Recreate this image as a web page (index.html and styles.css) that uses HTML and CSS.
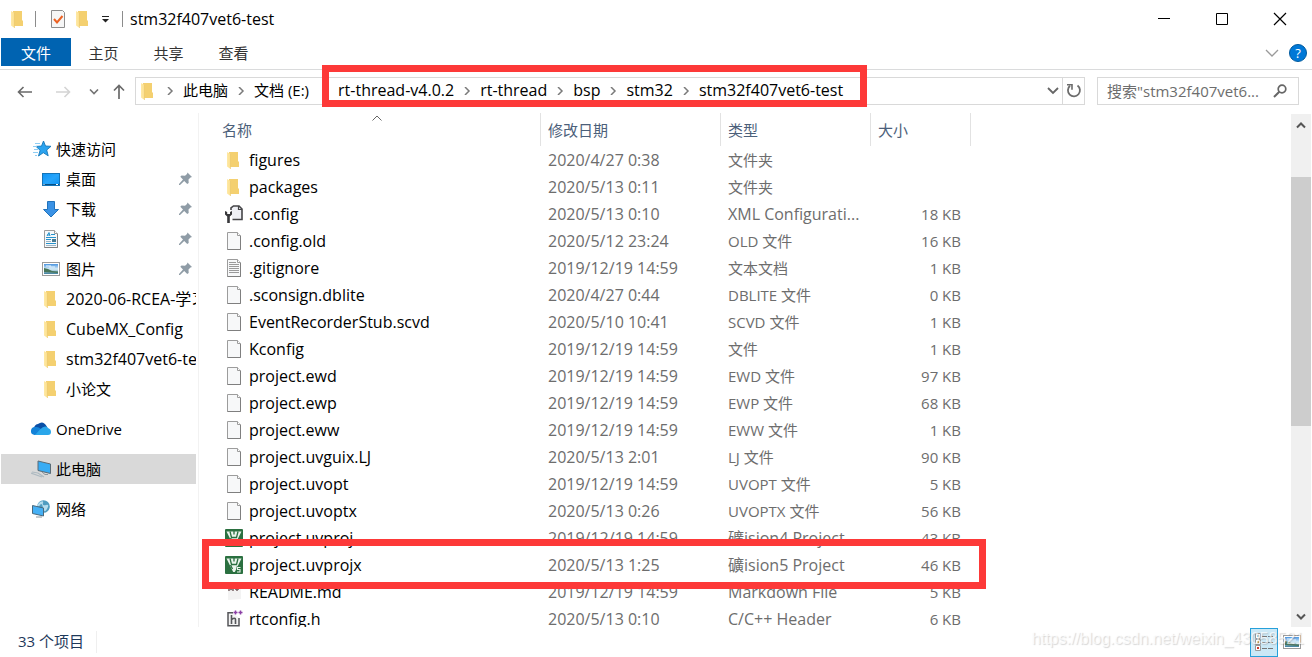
FILE: index.html
```html
<!DOCTYPE html>
<html lang="zh-CN">
<head>
<meta charset="utf-8">
<meta name="viewport" content="width=device-width, initial-scale=1">
<title>stm32f407vet6-test</title>
<link rel="stylesheet" href="styles.css">
</head>
<body>
<svg class="defs" aria-hidden="true">
  <defs>
    <linearGradient id="gFold" x1="0" x2="1"><stop offset="0" stop-color="#ffe9a6"/><stop offset="1" stop-color="#fbdf8d"/></linearGradient>
    <linearGradient id="gBlue" x1="0" y1="0" x2="1" y2="1"><stop offset="0" stop-color="#0d93f5"/><stop offset=".5" stop-color="#27a5fb"/><stop offset="1" stop-color="#0e93f2"/></linearGradient>
    <linearGradient id="gSky" x1="0" y1="0" x2="0" y2="1"><stop offset="0" stop-color="#4a94e0"/><stop offset=".5" stop-color="#d7edf8"/><stop offset="1" stop-color="#3d7e9c"/></linearGradient>
    <symbol id="folder" viewBox="0 0 18 18">
      <path d="M4 1h9v9.500h1V16H4z" fill="#f4d070"/>
      <path d="M2 1l3.500 2v15L2 15.500z" fill="url(#gFold)"/>
      <path d="M5.500 3v15" stroke="#eac66a" stroke-width=".6"/>
    </symbol>
    <symbol id="page" viewBox="0 0 18 18">
      <path d="M2.500.5h10l3 3v14h-13z" fill="#f7f8f9" stroke="#9c9c9c"/>
      <path d="M12.500.5v3h3" fill="#fff" stroke="#9c9c9c"/>
      <path d="M2.500 17.500h13V4" fill="none" stroke="#7f7f7f"/>
    </symbol>
    <symbol id="text" viewBox="0 0 18 18">
      <use href="#page"/>
      <path d="M4 3.500h7M4 5.500h10M4 7.500h10M4 9.500h10M4 11.500h10M4 13.500h10" stroke="#9a9a9a"/>
    </symbol>
    <symbol id="config" viewBox="0 0 18 18">
      <path d="M6 5V3l2.500-2h5.500l3 3v10.500H7.500" fill="#eff0f5" stroke="#454548" stroke-width="1.600"/>
      <path d="M13.500 1v3.500H17" fill="none" stroke="#454548" stroke-width="1.200"/>
      <path d="M0 6v3.500l2.200 2V18h2.600v-6.500l2.200-2V6L5 7v2H2.200V7z" fill="#38383b"/>
    </symbol>
    <symbol id="keil" viewBox="0 0 18 18">
      <rect width="18" height="18" rx="1" fill="#2b7040"/>
      <path d="M1.500 2.500h15L9.800 16H8.200z" fill="#eaf4ec"/>
      <path d="M5 2.500l1.500 6h5L13 2.500M9 2v3.500M5.500 9l2 4" fill="none" stroke="#2b7040" stroke-width="1.300"/>
    </symbol>
    <symbol id="keil5" viewBox="0 0 18 18">
      <use href="#keil"/>
      <path d="M11.500 10.500H17V17h-5.500z" fill="#2b7040"/>
      <path d="M15.500 11.500h-3v2h2.500v2.500h-3" fill="none" stroke="#e8f3e9" stroke-width="1.100"/>
    </symbol>
    <symbol id="md" viewBox="0 0 18 18">
      <path d="M3 1h10l3 3v12L3 17z" fill="#f3f3f3"/>
      <path d="M4 8V4l2 2.500L8 4v4M10 6h4M12 4v4" fill="none" stroke="#6e5658" stroke-width="1.400"/>
    </symbol>
    <symbol id="header" viewBox="0 0 18 18">
      <path d="M8 2.800H3v13h11V8" fill="#f3f3f3" stroke="#55565a" stroke-width="1.500"/>
      <path d="M6.500 5v9M6.500 9.500q4-2.500 4 0V14" fill="none" stroke="#55565a" stroke-width="1.600"/>
      <path d="M8.500 2.500h4M10.500.5v4M13.500 2.500h4M15.500.5v4" stroke="#8b3fa5" stroke-width="1.500"/>
    </symbol>
    <symbol id="star" viewBox="0 0 18 18">
      <path d="M10.500 1l2 5 5.500.3-4.300 3.700 1.500 5.800-4.900-3.100-4.800 3.300 1.600-5.700L3 6.400l5.500-.3z" fill="#2ba3ef" stroke="#1677b8" stroke-width=".9"/>
      <path d="M2 3.500h5M0 6.500h4M1 9.500h4M0 12.500h5M2 15.500h2" stroke="#8fcdf3"/>
    </symbol>
    <symbol id="desktop" viewBox="0 0 18 18">
      <rect x=".5" y="3.500" width="17" height="12" fill="url(#gBlue)" stroke="#1474b8"/>
      <path d="M1 14.500h16" stroke="#064e82"/><path d="M1.500 14.500h1M14 14.500h2" stroke="#fff"/>
    </symbol>
    <symbol id="down" viewBox="0 0 18 18">
      <path d="M5.500 1.500h7v8h4L9 17 1.500 9.500h4z" fill="#3a92e5" stroke="#2173bb"/>
    </symbol>
    <symbol id="doc" viewBox="0 0 18 18">
      <use href="#page"/>
      <path d="M5 6l2-3.500L8 6M5 5h3M9 4.500h4" fill="none" stroke="#2592cd"/>
      <path d="M4 7.500h10M4 9.500h5M4 13.500h10" stroke="#2592cd"/><path d="M4 11.500h5M4 15.500h10" stroke="#9bb5c5"/><path d="M10 9h4v3h-4z" fill="#477a92"/>
    </symbol>
    <symbol id="picture" viewBox="0 0 18 18">
      <rect x=".5" y="2.500" width="17" height="13" fill="#fff" stroke="#9b9b9b"/>
      <path d="M2 4h14v10H2z" fill="url(#gSky)"/><path d="M2 8l4 1 4 2 6 .500V13l-14-1z" fill="#47755a"/><path d="M4 6h5M7 7h6" stroke="#e6f4fd"/>
    </symbol>
    <symbol id="pin" viewBox="0 0 14 14">
      <path d="M8.500.5L13 5l-1.500.6-2 2 .2 3.400-1.500 1-3-3L1 13H0v-1l4-4.500-2.700-2.800L2.500 3.500l3.500.3L8 2z" fill="#8f9ca6"/>
    </symbol>
    <symbol id="cloud" viewBox="0 0 20 14">
      <path d="M3 7a5 5 0 0 1 4-5q5-4 8.500 2l1 2-7 3z" fill="#0a4fa6"/>
      <path d="M3.500 13a4 4 0 0 1 1-8q3-.5 5.500 2l5 5z" fill="#1482d8"/>
      <path d="M9 7.500Q14 2.500 17 6q3 1 3 4 0 3-3 3H4z" fill="#2aa6ea"/>
    </symbol>
    <symbol id="pc" viewBox="0 0 20 18">
      <path d="M7 1l12.500 3v9.500L7 10.500z" fill="#38acf4" stroke="#5a6b76"/>
      <path d="M11 12l3 2.500h3" fill="none" stroke="#8a949a"/>
      <path d="M0 13l11 4M1 12l6 1 6 4" fill="none" stroke="#aebac1" stroke-width="1.200"/>
    </symbol>
    <symbol id="net" viewBox="0 0 18 18">
      <circle cx="11.500" cy="6.500" r="6.300" fill="#4f9cc0"/>
      <path d="M8 2q4-2 3 1t3 2 1 4-4-1-3-3-3 0z" fill="#b5dced"/>
      <path d="M.5 5.500l11 2.500v8L.5 13.500z" fill="#45b0f5" stroke="#49687c"/><path d="M4 17h6" stroke="#8a979e"/>
    </symbol>
    <symbol id="chev" viewBox="0 0 8 8"><path d="M2 0l4 4-4 4" fill="none" stroke="#7a7a7a" stroke-width="1.500"/></symbol>
  </defs>
</svg>

<div class="window">
  <header class="titlebar">
    <svg class="ic"><use href="#folder"/></svg>
    <span class="bar bar-dark"></span>
    <button class="plain" aria-label="属性"><svg class="ic" viewBox="0 0 18 18"><path d="M2.500.5h11l2 2v15h-13z" fill="#f6f6f6" stroke="#8d8d8d"/><path d="M5 9l3 3.500L13.500 6" fill="none" stroke="#ec6223" stroke-width="2"/></svg></button>
    <button class="plain" aria-label="新建文件夹"><svg class="ic"><use href="#folder"/></svg></button>
    <button class="plain quick" aria-label="自定义快速访问工具栏"><svg width="8" height="8" viewBox="0 0 8 8"><path d="M0 1.500h7" stroke="#222"/><path d="M0 4h7L3.500 7.500z" fill="#222"/></svg></button>
    <span class="bar"></span>
    <h1 class="title">stm32f407vet6-test</h1>
    <div class="controls">
      <button class="plain" aria-label="最小化"><svg width="14" height="14"><path d="M1 6.500h12" stroke="#000"/></svg></button>
      <button class="plain" aria-label="最大化"><svg width="14" height="14"><path d="M1.500 1.500h11v11h-11z" fill="none" stroke="#000"/></svg></button>
      <button class="plain" aria-label="关闭"><svg width="14" height="14"><path d="M1 1l12 12M13 1L1 13" stroke="#000" stroke-width="1.200"/></svg></button>
    </div>
  </header>

  <nav class="ribbon">
    <button class="tab tab-file">文件</button>
    <button class="tab">主页</button>
    <button class="tab">共享</button>
    <button class="tab">查看</button>
    <span class="grow"></span>
    <button class="plain expand" aria-label="展开功能区"><svg width="14" height="8"><path d="M1 1l6 6 6-6" fill="none" stroke="#9a9a9a" stroke-width="1.300"/></svg></button>
    <button class="help" aria-label="帮助">?</button>
  </nav>

  <div class="address">
    <div class="nav-buttons">
      <button class="plain" aria-label="后退"><svg width="16" height="12"><path d="M15 6H1.500M6.500 1l-5 5 5 5" fill="none" stroke="#6a6a6a" stroke-width="1.600"/></svg></button>
      <button class="plain" aria-label="前进"><svg width="16" height="12"><path d="M1 6h13.500M9.500 1l5 5-5 5" fill="none" stroke="#d4d4d4" stroke-width="1.600"/></svg></button>
      <button class="plain" aria-label="最近"><svg width="10" height="6"><path d="M1 .5l4 4 4-4" fill="none" stroke="#747474" stroke-width="1.600"/></svg></button>
      <button class="plain" aria-label="上移"><svg width="12" height="16"><path d="M6 15V1.500M1 6.500l5-5 5 5" fill="none" stroke="#6a6a6a" stroke-width="1.700"/></svg></button>
    </div>
    <div class="path">
      <svg class="ic"><use href="#folder"/></svg>
      <svg class="chev"><use href="#chev"/></svg>
      <a class="crumb" href="#">此电脑</a>
      <svg class="chev"><use href="#chev"/></svg>
      <a class="crumb" href="#">文档 (E:)</a>
      <div class="crumbs-marked">
        <a class="crumb" href="#">rt-thread-v4.0.2</a>
        <svg class="chev"><use href="#chev"/></svg>
        <a class="crumb" href="#">rt-thread</a>
        <svg class="chev"><use href="#chev"/></svg>
        <a class="crumb" href="#">bsp</a>
        <svg class="chev"><use href="#chev"/></svg>
        <a class="crumb" href="#">stm32</a>
        <svg class="chev"><use href="#chev"/></svg>
        <a class="crumb" href="#">stm32f407vet6-test</a>
        <span class="mark mark-path"></span>
      </div>
      <span class="grow"></span>
      <button class="plain drop" aria-label="以前的位置"><svg width="12" height="8"><path d="M1 1l5 5 5-5" fill="none" stroke="#666" stroke-width="1.800"/></svg></button>
      <button class="plain refresh" aria-label="刷新"><svg width="16" height="16" viewBox="0 0 16 16"><path d="M11.500 2.500a6 6 0 1 1-7.500.3" fill="none" stroke="#6c6c6c" stroke-width="1.800"/><path d="M1 1.800h5v5" fill="none" stroke="#6c6c6c" stroke-width="1.600"/></svg></button>
    </div>
    <label class="search">
      <input type="search" aria-label="搜索" placeholder='搜索"stm32f407vet6...'>
      <svg width="14" height="14"><circle cx="9" cy="5" r="3.800" fill="none" stroke="#666" stroke-width="1.700"/><path d="M6.300 7.700L1 13" stroke="#666" stroke-width="2"/></svg>
    </label>
  </div>

  <div class="main">
    <nav class="tree">
      <a class="node" href="#"><svg class="ic"><use href="#star"/></svg><span>快速访问</span></a>
      <a class="node sub" href="#"><svg class="ic"><use href="#desktop"/></svg><span>桌面</span><svg class="pin"><use href="#pin"/></svg></a>
      <a class="node sub" href="#"><svg class="ic"><use href="#down"/></svg><span>下载</span><svg class="pin"><use href="#pin"/></svg></a>
      <a class="node sub" href="#"><svg class="ic"><use href="#doc"/></svg><span>文档</span><svg class="pin"><use href="#pin"/></svg></a>
      <a class="node sub" href="#"><svg class="ic"><use href="#picture"/></svg><span>图片</span><svg class="pin"><use href="#pin"/></svg></a>
      <a class="node sub" href="#"><svg class="ic"><use href="#folder"/></svg><span class="latin">2020-06-RCEA-学习</span></a>
      <a class="node sub" href="#"><svg class="ic"><use href="#folder"/></svg><span class="latin">CubeMX_Config</span></a>
      <a class="node sub" href="#"><svg class="ic"><use href="#folder"/></svg><span class="latin">stm32f407vet6-test</span></a>
      <a class="node sub" href="#"><svg class="ic"><use href="#folder"/></svg><span>小论文</span></a>
      <a class="node root" href="#"><svg class="ic-wide"><use href="#cloud"/></svg><span>OneDrive</span></a>
      <a class="node root selected" href="#"><svg class="ic-wide"><use href="#pc"/></svg><span>此电脑</span></a>
      <a class="node root" href="#"><svg class="ic-wide"><use href="#net"/></svg><span>网络</span></a>
    </nav>

    <div class="list">
      <table class="files">
        <colgroup><col class="c-name"><col class="c-date"><col class="c-type"><col class="c-size"></colgroup>
        <thead>
          <tr><th>名称<svg class="sort" width="10" height="6"><path d="M.5 5.500l4.500-4.500 4.500 4.500" fill="none" stroke="#666"/></svg></th><th>修改日期</th><th>类型</th><th>大小</th></tr>
        </thead>
        <tbody>
          <tr><td><svg class="ic"><use href="#folder"/></svg>figures</td><td>2020/4/27 0:38</td><td>文件夹</td><td></td></tr>
          <tr><td><svg class="ic"><use href="#folder"/></svg>packages</td><td>2020/5/13 0:11</td><td>文件夹</td><td></td></tr>
          <tr><td><svg class="ic"><use href="#config"/></svg>.config</td><td>2020/5/13 0:10</td><td class="latin">XML Configurati...</td><td>18 KB</td></tr>
          <tr><td><svg class="ic"><use href="#page"/></svg>.config.old</td><td>2020/5/12 23:24</td><td>OLD 文件</td><td>16 KB</td></tr>
          <tr><td><svg class="ic"><use href="#text"/></svg>.gitignore</td><td>2019/12/19 14:59</td><td>文本文档</td><td>1 KB</td></tr>
          <tr><td><svg class="ic"><use href="#page"/></svg>.sconsign.dblite</td><td>2020/4/27 0:44</td><td>DBLITE 文件</td><td>0 KB</td></tr>
          <tr><td><svg class="ic"><use href="#page"/></svg>EventRecorderStub.scvd</td><td>2020/5/10 10:41</td><td>SCVD 文件</td><td>1 KB</td></tr>
          <tr><td><svg class="ic"><use href="#page"/></svg>Kconfig</td><td>2019/12/19 14:59</td><td>文件</td><td>1 KB</td></tr>
          <tr><td><svg class="ic"><use href="#page"/></svg>project.ewd</td><td>2019/12/19 14:59</td><td>EWD 文件</td><td>97 KB</td></tr>
          <tr><td><svg class="ic"><use href="#page"/></svg>project.ewp</td><td>2019/12/19 14:59</td><td>EWP 文件</td><td>68 KB</td></tr>
          <tr><td><svg class="ic"><use href="#page"/></svg>project.eww</td><td>2019/12/19 14:59</td><td>EWW 文件</td><td>1 KB</td></tr>
          <tr><td><svg class="ic"><use href="#page"/></svg>project.uvguix.LJ</td><td>2020/5/13 2:01</td><td>LJ 文件</td><td>90 KB</td></tr>
          <tr><td><svg class="ic"><use href="#page"/></svg>project.uvopt</td><td>2019/12/19 14:59</td><td>UVOPT 文件</td><td>5 KB</td></tr>
          <tr><td><svg class="ic"><use href="#page"/></svg>project.uvoptx</td><td>2020/5/13 0:26</td><td>UVOPTX 文件</td><td>56 KB</td></tr>
          <tr><td><svg class="ic"><use href="#keil"/></svg>project.uvproj</td><td>2019/12/19 14:59</td><td class="latin">礦ision4 Project</td><td>43 KB</td></tr>
          <tr class="marked"><td><svg class="ic"><use href="#keil5"/></svg>project.uvprojx<span class="mark mark-row"></span></td><td>2020/5/13 1:25</td><td class="latin">礦ision5 Project</td><td>46 KB</td></tr>
          <tr><td><svg class="ic"><use href="#md"/></svg>README.md</td><td>2019/12/19 14:59</td><td class="latin">Markdown File</td><td>5 KB</td></tr>
          <tr><td><svg class="ic"><use href="#header"/></svg>rtconfig.h</td><td>2020/5/13 0:10</td><td class="latin">C/C++ Header</td><td>6 KB</td></tr>
        </tbody>
      </table>
    </div>

    <div class="scroll">
      <button class="plain" aria-label="向上滚动"><svg width="10" height="8"><path d="M1 6.500l4-4 4 4" fill="none" stroke="#555" stroke-width="2"/></svg></button>
      <div class="track"><div class="thumb"></div></div>
      <button class="plain" aria-label="向下滚动"><svg width="10" height="8"><path d="M1 1.500l4 4 4-4" fill="none" stroke="#555" stroke-width="2"/></svg></button>
    </div>
  </div>

  <footer class="status">
    <span class="count">33 个项目</span>
    <span class="grow"></span>
    <button class="view view-on" aria-label="详细信息"><svg width="18" height="18" viewBox="0 0 18 18"><path d="M.5.5h5v5h-5zM.5 6.500h5v5h-5zM.5 12.500h5v5h-5z" fill="#fff" stroke="#999"/><path d="M2 2h2v2H2z" fill="#5c9fc0"/><path d="M2 8h2v2H2z" fill="#b1924a"/><path d="M2 14h2v2H2z" fill="#d03828"/><path d="M7 3.500h5M13 3.500h5M7 9.500h5M13 9.500h5M7 15.500h5M13 15.500h5" stroke="#777"/></svg></button>
    <button class="view" aria-label="大图标"><svg class="ic"><use href="#picture"/></svg></button>
    <span class="watermark">https://blog.csdn.net/weixin_43058521</span>
  </footer>
</div>
</body>
</html>
```

FILE: styles.css
```css
* { box-sizing: border-box; }

body {
  margin: 0;
  background: #fff;
  color: #000;
  font: 15px/20px "Open Sans", "Noto Sans CJK SC", sans-serif;
}

button, input { font: inherit; color: inherit; }
a { color: inherit; text-decoration: none; }
svg { flex: none; display: block; }

.defs { position: absolute; width: 0; height: 0; }
.ic { width: 18px; height: 18px; }
.ic-wide { width: 20px; height: 18px; }
.grow { flex: 1; }

.title,
.latin,
.crumbs-marked,
.files td:nth-child(-n+2) {
  font-size: 16px;
}

.plain {
  display: flex;
  align-items: center;
  justify-content: center;
  padding: 0;
  border: 0;
  background: none;
}

.window {
  display: flex;
  flex-direction: column;
  height: 100vh;
  overflow: hidden;
}

/* Title bar */
.titlebar {
  display: flex;
  align-items: center;
  height: 38px;
  padding-left: 9px;
  flex: none;
}
.bar { width: 1px; height: 16px; background: #8c8c8c; }
.bar-dark { margin: 0 13px 0 8px; }
.titlebar .plain + .plain { margin-left: 7px; }
.titlebar .plain + .quick { margin-left: 10px; }
.titlebar .quick + .bar { margin: 0 7px 0 12px; }
.title { margin: 0; font-weight: 400; }
.controls { display: flex; margin-left: auto; padding-right: 3px; }
.controls .plain, .titlebar .controls .plain + .plain { width: 58px; height: 38px; margin: 0; }

/* Ribbon */
.ribbon {
  display: flex;
  flex: none;
  height: 32px;
  padding: 0 5px 3px 1px;
  border-bottom: 1px solid #dadbdc;
}
.tab {
  width: 65px;
  padding: 1px 0 0;
  border: 0;
  background: none;
  color: #333;
}
.tab-file { width: 70px; background: #0063b1; color: #fff; }
.expand { width: 34px; padding-top: 2px; }
.help {
  width: 18px;
  height: 18px;
  align-self: center;
  margin-top: 2px;
  padding: 0;
  border: 1px solid #005a9e;
  border-radius: 50%;
  background: #0078d7;
  color: #fff;
  font-size: 13px;
  line-height: 16px;
}

/* Address row */
.address {
  display: flex;
  align-items: center;
  flex: none;
  height: 43px;
  padding: 0 13px 1px 17px;
}
.nav-buttons { display: flex; align-items: center; gap: 18px; width: 118px; padding-top: 2px; }
.nav-buttons .plain:first-child { margin-right: 4px; }
.nav-buttons .plain:last-child { margin-left: -4px; }
.path {
  display: flex;
  align-items: center;
  flex: 1;
  min-width: 0;
  height: 28px;
  border: 1px solid #d9d9d9;
  padding-left: 3px;
  white-space: nowrap;
}
.crumb { padding-bottom: 2px; }
.chev { width: 8px; height: 8px; margin: 0 9px; }
.crumbs-marked {
  position: relative;
  display: flex;
  align-items: center;
  height: 26px;
  margin-left: 29px;
}
.mark { position: absolute; border: 7px solid #fd3938; pointer-events: none; }
.mark-path { inset: -13px -24px -3px -16px; }
.drop { width: 18px; height: 26px; }
.refresh { width: 22px; height: 26px; border-left: 1px solid #d9d9d9; }
.search {
  display: flex;
  align-items: center;
  width: 202px;
  height: 28px;
  margin-left: 12px;
  padding: 0 11px 0 9px;
  border: 1px solid #d9d9d9;
}
.search input {
  flex: 1;
  min-width: 0;
  padding: 0;
  border: 0;
  outline: 0;
  background: none;
}
.search input::placeholder { color: #6d6d6d; opacity: 1; }

/* Body */
.main { display: flex; flex: 1; min-height: 0; }

.tree {
  width: 199px;
  flex: none;
  padding: 21px 2px 0 1px;
  border-right: 1px solid #f2f2f2;
  overflow: hidden;
}
.node {
  display: flex;
  align-items: center;
  gap: 5px;
  height: 30px;
  padding-left: 32px;
  overflow: hidden;
  white-space: nowrap;
}
.sub { padding-left: 41px; gap: 6px; }
.root { margin-top: 10px; padding-left: 30px; }
.selected { background: #d9d9d9; }
.pin { width: 14px; height: 14px; margin: 0 3px 0 auto; }

.list { flex: 1; min-width: 0; overflow: hidden; }
.files { table-layout: fixed; width: 772px; border-collapse: separate; border-spacing: 0; }
.c-name { width: 342px; }
.c-date { width: 180px; }
.c-type { width: 150px; }
.c-size { width: 100px; }
.files th {
  position: relative;
  height: 33px;
  padding: 0 0 0 7px;
  border-right: 1px solid #e2e2e2;
  color: #4c607a;
  font-weight: 400;
  text-align: left;
}
.files th:first-child { padding-left: 23px; }
.sort { position: absolute; top: 2px; left: 173px; }
.files td {
  height: 27px;
  padding: 0 0 0 7px;
  color: #6d6d6d;
  white-space: nowrap;
}
.files td:first-child { padding-left: 26px; color: #000; }
.files td:last-child { padding-right: 10px; text-align: right; }
.files .ic { display: inline-block; margin-right: 6px; vertical-align: -3px; }
.marked { position: relative; }
.mark-row { inset: -12px -15px -11px 3px; }

.scroll {
  display: flex;
  flex-direction: column;
  width: 20px;
  margin: 1px 1px 0 0;
  background: #f0f0f0;
}
.scroll .plain { height: 21px; }
.track { flex: 1; padding-top: 42px; }
.thumb { height: 58%; background: #cdcdcd; }

/* Status bar */
.status {
  position: relative;
  display: flex;
  align-items: center;
  flex: none;
  height: 30px;
  padding: 0 6px 0 18px;
}
.count { padding: 0 12px 2px 0; border-right: 1px solid #efefef; color: #1e395b; }
.view {
  display: flex;
  align-items: center;
  justify-content: center;
  width: 28px;
  height: 29px;
  padding: 0;
  border: 1px solid transparent;
  background: none;
}
.view-on { border-color: #26a0da; background: #cbe8f6; }
.watermark {
  position: absolute;
  right: 8px;
  top: 2px;
  color: rgba(255, 255, 255, .7);
  font: 16px/20px "Liberation Sans", sans-serif;
  text-shadow: 1px 1px 1px rgba(120, 120, 120, .3);
}
```
